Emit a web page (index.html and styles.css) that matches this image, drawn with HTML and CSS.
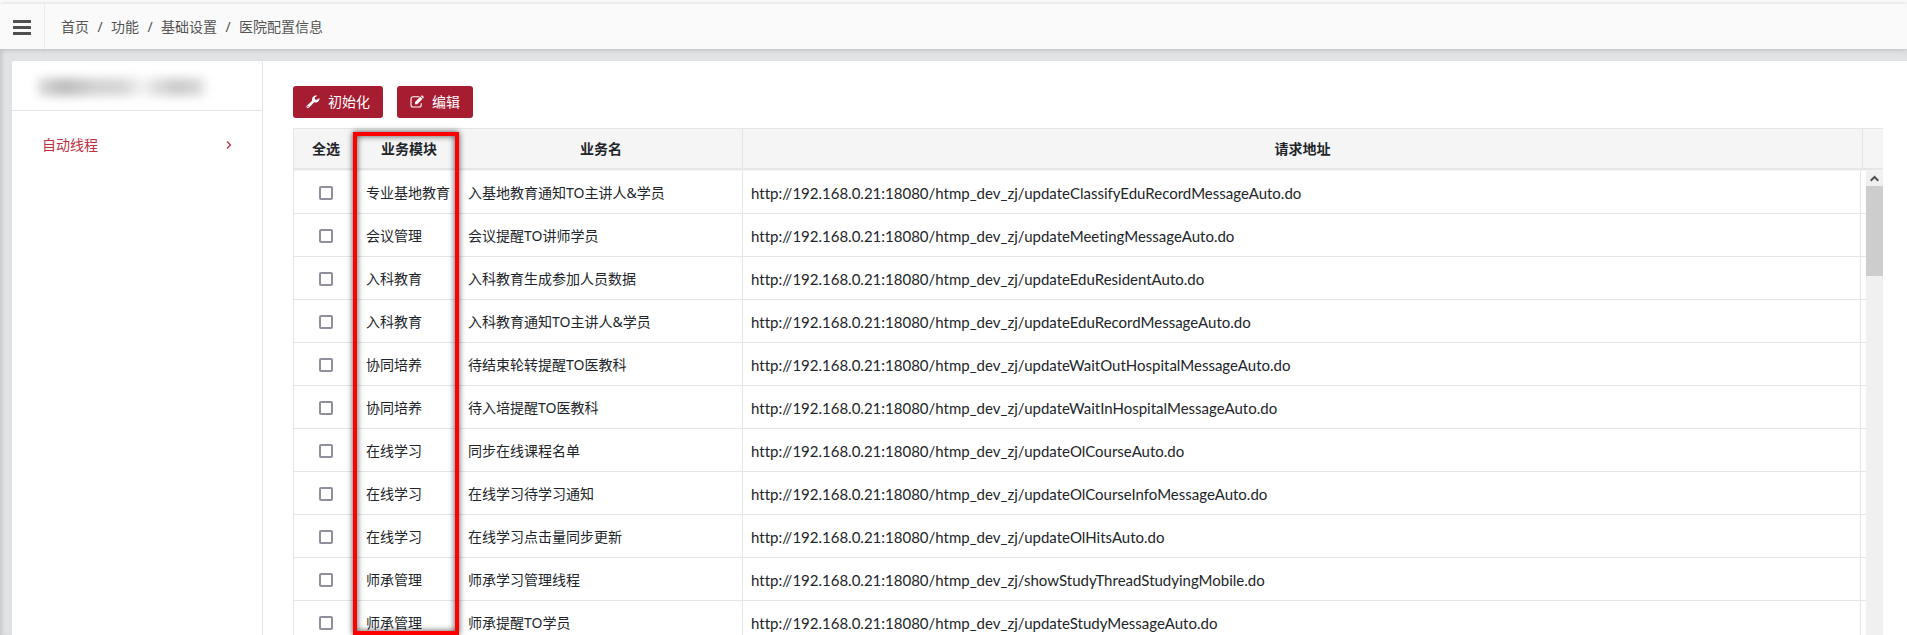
FILE: index.html
```
<!DOCTYPE html>
<html lang="zh-CN">
<head>
    <meta charset="UTF-8">
    <meta name="viewport" content="width=device-width, initial-scale=1.0">
    <title>医院配置信息</title>
    <link rel="stylesheet" href="styles.css">
</head>
<body>
    <header class="topbar">
        <button type="button" class="menu-toggle" aria-label="菜单">
            <svg width="18" height="16" viewBox="0 0 18 16"><path d="M0 2.500h18M0 8.500h18M0 14.500h18" stroke="#505050" stroke-width="3"/></svg>
        </button>
        <nav class="breadcrumb">
            <a href="#">首页</a><span>/</span><a href="#">功能</a><span>/</span><a href="#">基础设置</a><span>/</span><a href="#">医院配置信息</a>
        </nav>
    </header>

    <main class="page">
        <div class="panel">
            <aside class="sidebar">
                <div class="sidebar-title">
                    <div class="masked"></div>
                </div>
                <a class="sidebar-item" href="#">
                    自动线程
                    <svg width="6" height="10" viewBox="0 0 6 10"><path d="M1 1.5L4.500 5L1 8.500" fill="none" stroke="currentColor" stroke-width="1.3"/></svg>
                </a>
            </aside>

            <section class="content">
                <div class="toolbar">
                    <button type="button" class="btn">
                        <svg width="14" height="14" viewBox="0 0 14 14"><path fill="#fff" fill-rule="evenodd" d="M13.400 3.100C13.900 5.300 12.100 7.600 9.700 7.600C9.100 7.600 8.700 7.500 8.200 7.300L2.900 12.700C2.300 13.300 1.500 13.300 .9 12.700C.3 12.100 .3 11.300 .9 10.700L6.300 5.500C5.300 2.700 7.600 .1 10.500 .4L11.300 .7L8.900 2.300V4L10.500 4.900ZM2 11.100A.6 .6 0 1 0 2 12.300A.6 .6 0 1 0 2 11.100Z"/></svg>
                        初始化
                    </button>
                    <button type="button" class="btn">
                        <svg width="14" height="14" viewBox="0 0 14 14"><path d="M9.500 1.800H3A2 2 0 0 0 1 3.800V10A2 2 0 0 0 3 12H9.200A2 2 0 0 0 11.200 10V8.300" fill="none" stroke="#fff" stroke-width="1.100"/><path fill="#fff" d="M5 7.100L10.300 1.800L12.500 4L7.200 9.300H5ZM10.900 1.200L11.500 .6Q12 .2 12.500 .6L13.600 1.700Q14 2.200 13.600 2.700L13.100 3.400Z"/></svg>
                        编辑
                    </button>
                </div>

                <div class="grid">
                    <table class="grid-table grid-head">
                        <colgroup><col class="col-check"><col class="col-module"><col class="col-name"><col><col class="col-corner"></colgroup>
                        <thead>
                            <tr>
                                <th>全选</th>
                                <th>业务模块</th>
                                <th class="line">业务名</th>
                                <th class="line">请求地址</th>
                                <th></th>
                            </tr>
                        </thead>
                    </table>

                    <div class="grid-body">
                        <table class="grid-table grid-rows">
                            <colgroup><col class="col-check"><col class="col-module"><col class="col-name"><col><col class="col-rest"></colgroup>
                            <tbody>
                                <tr>
                                    <td><input type="checkbox" aria-label="选择"></td>
                                    <td>专业基地教育</td>
                                    <td class="line">入基地教育通知TO主讲人&amp;学员</td>
                                    <td class="line url">http://192.168.0.21:18080/htmp_dev_zj/updateClassifyEduRecordMessageAuto.do</td>
                                    <td></td>
                                </tr>
                                <tr>
                                    <td><input type="checkbox" aria-label="选择"></td>
                                    <td>会议管理</td>
                                    <td class="line">会议提醒TO讲师学员</td>
                                    <td class="line url">http://192.168.0.21:18080/htmp_dev_zj/updateMeetingMessageAuto.do</td>
                                    <td></td>
                                </tr>
                                <tr>
                                    <td><input type="checkbox" aria-label="选择"></td>
                                    <td>入科教育</td>
                                    <td class="line">入科教育生成参加人员数据</td>
                                    <td class="line url">http://192.168.0.21:18080/htmp_dev_zj/updateEduResidentAuto.do</td>
                                    <td></td>
                                </tr>
                                <tr>
                                    <td><input type="checkbox" aria-label="选择"></td>
                                    <td>入科教育</td>
                                    <td class="line">入科教育通知TO主讲人&amp;学员</td>
                                    <td class="line url">http://192.168.0.21:18080/htmp_dev_zj/updateEduRecordMessageAuto.do</td>
                                    <td></td>
                                </tr>
                                <tr>
                                    <td><input type="checkbox" aria-label="选择"></td>
                                    <td>协同培养</td>
                                    <td class="line">待结束轮转提醒TO医教科</td>
                                    <td class="line url">http://192.168.0.21:18080/htmp_dev_zj/updateWaitOutHospitalMessageAuto.do</td>
                                    <td></td>
                                </tr>
                                <tr>
                                    <td><input type="checkbox" aria-label="选择"></td>
                                    <td>协同培养</td>
                                    <td class="line">待入培提醒TO医教科</td>
                                    <td class="line url">http://192.168.0.21:18080/htmp_dev_zj/updateWaitInHospitalMessageAuto.do</td>
                                    <td></td>
                                </tr>
                                <tr>
                                    <td><input type="checkbox" aria-label="选择"></td>
                                    <td>在线学习</td>
                                    <td class="line">同步在线课程名单</td>
                                    <td class="line url">http://192.168.0.21:18080/htmp_dev_zj/updateOlCourseAuto.do</td>
                                    <td></td>
                                </tr>
                                <tr>
                                    <td><input type="checkbox" aria-label="选择"></td>
                                    <td>在线学习</td>
                                    <td class="line">在线学习待学习通知</td>
                                    <td class="line url">http://192.168.0.21:18080/htmp_dev_zj/updateOlCourseInfoMessageAuto.do</td>
                                    <td></td>
                                </tr>
                                <tr>
                                    <td><input type="checkbox" aria-label="选择"></td>
                                    <td>在线学习</td>
                                    <td class="line">在线学习点击量同步更新</td>
                                    <td class="line url">http://192.168.0.21:18080/htmp_dev_zj/updateOlHitsAuto.do</td>
                                    <td></td>
                                </tr>
                                <tr>
                                    <td><input type="checkbox" aria-label="选择"></td>
                                    <td>师承管理</td>
                                    <td class="line">师承学习管理线程</td>
                                    <td class="line url">http://192.168.0.21:18080/htmp_dev_zj/showStudyThreadStudyingMobile.do</td>
                                    <td></td>
                                </tr>
                                <tr>
                                    <td><input type="checkbox" aria-label="选择"></td>
                                    <td>师承管理</td>
                                    <td class="line">师承提醒TO学员</td>
                                    <td class="line url">http://192.168.0.21:18080/htmp_dev_zj/updateStudyMessageAuto.do</td>
                                    <td></td>
                                </tr>
                            </tbody>
                        </table>

                        <div class="scrollbar">
                            <div class="scroll-up">
                                <svg width="9" height="7" viewBox="0 0 9 7"><path d="M0.700 5.800L4.500 2L8.300 5.800" fill="none" stroke="#505050" stroke-width="2"/></svg>
                            </div>
                            <div class="scroll-thumb"></div>
                        </div>
                    </div>

                    <div class="highlight"></div>
                </div>
            </section>
        </div>
    </main>
</body>
</html>
```
FILE: styles.css
```
* {
    box-sizing: border-box;
}

body {
    margin: 0;
    height: 100vh;
    padding-top: 4px;
    overflow: hidden;
    display: flex;
    flex-direction: column;
    background: #fff;
    color: #212529;
    font-family: "Noto Sans", "Noto Sans CJK SC", sans-serif;
    font-size: 14px;
    line-height: 20px;
}

a {
    color: inherit;
    text-decoration: none;
}

svg {
    display: block;
    flex: none;
}

/* top bar */
.topbar {
    position: relative;
    z-index: 1;
    flex: none;
    display: flex;
    height: 45px;
    background: #fafafa;
    box-shadow: 0 0 6px rgba(0, 0, 0, 0.2);
}

.menu-toggle {
    width: 45px;
    padding: 0 0 0 13px;
    border: none;
    border-right: 1px solid #ebebeb;
    background: none;
    cursor: pointer;
}

.breadcrumb {
    display: flex;
    align-items: center;
    padding-left: 16px;
    color: #555;
}

.breadcrumb span {
    width: 22px;
    text-align: center;
}

/* layout */
.page {
    flex: 1;
    min-height: 0;
    padding: 12px 0 0 12px;
    background: #e1e2e4;
    box-shadow: inset 4px 0 4px -2px rgba(0, 0, 0, 0.12);
}

.panel {
    display: flex;
    height: 100%;
    background: #fff;
    border-radius: 2px 0 0 0;
}

.sidebar {
    flex: none;
    width: 251px;
    border-right: 1px solid #e4e5e7;
}

.sidebar-title {
    height: 50px;
    padding: 14px 56px 6px 26px;
    border-bottom: 1px solid #e4e5e7;
}

.masked {
    height: 24px;
    background: linear-gradient(90deg, #ddd 0%, #bcbcbc 15%, #d4d4d4 35%, #d6d6d6 50%, #f4f4f4 63%, #dedede 70%, #cacaca 83%, #d8d8d8 95%, #eee 100%) center / 100% 18px no-repeat;
    filter: blur(5px);
}

.sidebar-item {
    display: flex;
    align-items: center;
    justify-content: space-between;
    padding: 24px 30px;
    color: #c0303f;
}

.content {
    flex: 1;
    min-width: 0;
    display: flex;
    flex-direction: column;
    padding: 25px 24px 0 30px;
}

.toolbar {
    display: flex;
    gap: 14px;
    margin-bottom: 10px;
}

.btn {
    display: flex;
    align-items: center;
    gap: 8px;
    height: 32px;
    padding: 0 13px;
    border: none;
    border-radius: 3px;
    background: #a61c30;
    color: #fff;
    font: inherit;
    cursor: pointer;
}

/* data grid */
.grid {
    position: relative;
    flex: 1;
    min-height: 0;
    display: flex;
    flex-direction: column;
    border-top: 1px solid #e6e6e6;
    border-left: 1px solid #e6e6e6;
}

.grid-table {
    width: 100%;
    border-collapse: separate;
    border-spacing: 0;
    table-layout: fixed;
}

.grid-head {
    border-bottom: 1px solid #f5f5f5;
}

.col-check {
    width: 64px;
}

.col-module {
    width: 102px;
}

.col-name {
    width: 283px;
}

.col-corner {
    width: 20px;
}

.col-rest {
    width: 5px;
}

.grid-head th {
    height: 41px;
    padding: 0;
    background: #f5f5f5;
    border-bottom: 2px solid #e6e6e6;
    font-weight: bold;
}

.grid-body {
    flex: 1;
    min-height: 0;
    overflow: hidden;
    display: flex;
}

.grid-rows {
    flex: 1;
    min-width: 0;
    align-self: flex-start;
}

.grid-rows td {
    height: 43px;
    padding: 2px 0 0 8px;
    border-bottom: 1px solid #e6e6e6;
    white-space: nowrap;
}

.grid-rows td:first-child,
.grid-rows td:last-child {
    padding-left: 0;
    text-align: center;
}

.grid-table .line {
    border-right: 1px solid #e6e6e6;
}

.grid-rows .url {
    font-family: Lato, sans-serif;
    font-size: 15px;
    font-variant-ligatures: none;
}

.grid-rows input {
    appearance: none;
    display: block;
    width: 14px;
    height: 14px;
    margin: 0 auto;
    border: 2px solid #8f8f9d;
    border-radius: 2px;
    background: #fff;
}

.scrollbar {
    flex: none;
    width: 17px;
    background: #f0f0f0;
}

.scroll-up {
    display: flex;
    align-items: center;
    justify-content: center;
    height: 15px;
}

.scroll-thumb {
    height: 90px;
    background: #cdcdcd;
}

/* red frame over the module column */
.highlight {
    position: absolute;
    top: 3px;
    bottom: 0;
    left: 59px;
    width: 106px;
    border: 4px solid #f00;
    box-shadow: 0 0 6px rgba(0, 0, 0, 0.7), inset 0 0 6px rgba(0, 0, 0, 0.7);
    pointer-events: none;
}
```
